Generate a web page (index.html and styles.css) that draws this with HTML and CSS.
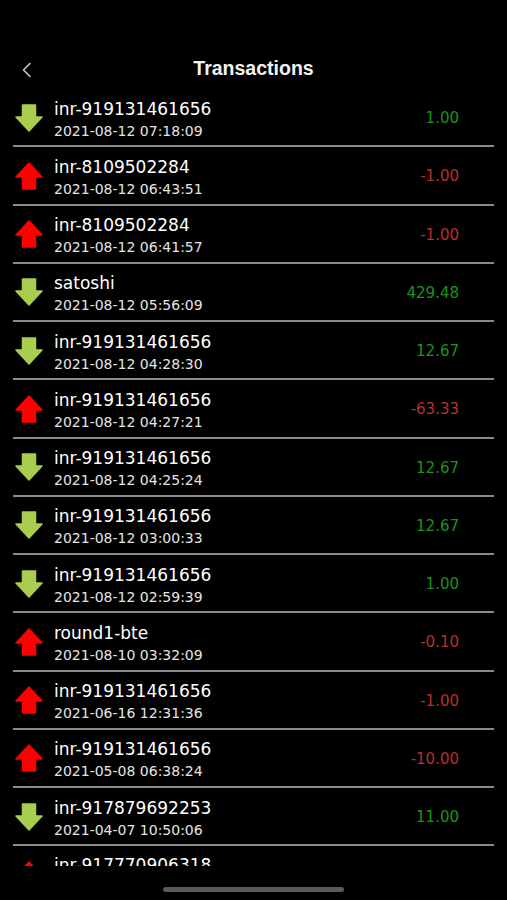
FILE: index.html
```html
<!DOCTYPE html>
<html lang="en">
<head>
  <meta charset="UTF-8">
  <meta name="viewport" content="width=device-width, initial-scale=1">
  <title>Transactions</title>
  <link rel="stylesheet" href="styles.css">
</head>
<body>
  <svg class="defs" width="0" height="0" aria-hidden="true">
    <symbol id="arrowIn" viewBox="0 0 28 28">
      <path d="M7.5 1 H20.5 V13 H27 L14 27 L1 13 H7.5 Z" fill="#a9cd4e" stroke="#a9cd4e" stroke-width="1.5" stroke-linejoin="round"/>
    </symbol>
    <symbol id="arrowOut" viewBox="0 0 28 28">
      <path d="M7.5 27 H20.5 V15 H27 L14 1 L1 15 H7.5 Z" fill="#ff0000" stroke="#ff0000" stroke-width="1.5" stroke-linejoin="round"/>
    </symbol>
  </svg>

  <div class="screen">
    <!-- Header -->
    <div class="header">
      <button class="back" aria-label="Back">
        <svg width="12" height="16" viewBox="0 0 12 16"><polyline points="9,1.5 2.5,8 9,14.5" fill="none" stroke="#c8c8c8" stroke-width="1.6" stroke-linecap="round" stroke-linejoin="round"/></svg>
      </button>
      <h1>Transactions</h1>
      <span></span>
    </div>

    <!-- Transaction list -->
    <div class="list">
      <div class="row">
        <svg class="icon"><use href="#arrowIn"/></svg>
        <div class="info"><div class="name">inr-919131461656</div><div class="date">2021-08-12 07:18:09</div></div>
        <div class="amount in">1.00</div>
      </div>
      <div class="row">
        <svg class="icon"><use href="#arrowOut"/></svg>
        <div class="info"><div class="name">inr-8109502284</div><div class="date">2021-08-12 06:43:51</div></div>
        <div class="amount out">-1.00</div>
      </div>
      <div class="row">
        <svg class="icon"><use href="#arrowOut"/></svg>
        <div class="info"><div class="name">inr-8109502284</div><div class="date">2021-08-12 06:41:57</div></div>
        <div class="amount out">-1.00</div>
      </div>
      <div class="row">
        <svg class="icon"><use href="#arrowIn"/></svg>
        <div class="info"><div class="name">satoshi</div><div class="date">2021-08-12 05:56:09</div></div>
        <div class="amount in">429.48</div>
      </div>
      <div class="row">
        <svg class="icon"><use href="#arrowIn"/></svg>
        <div class="info"><div class="name">inr-919131461656</div><div class="date">2021-08-12 04:28:30</div></div>
        <div class="amount in">12.67</div>
      </div>
      <div class="row">
        <svg class="icon"><use href="#arrowOut"/></svg>
        <div class="info"><div class="name">inr-919131461656</div><div class="date">2021-08-12 04:27:21</div></div>
        <div class="amount out">-63.33</div>
      </div>
      <div class="row">
        <svg class="icon"><use href="#arrowIn"/></svg>
        <div class="info"><div class="name">inr-919131461656</div><div class="date">2021-08-12 04:25:24</div></div>
        <div class="amount in">12.67</div>
      </div>
      <div class="row">
        <svg class="icon"><use href="#arrowIn"/></svg>
        <div class="info"><div class="name">inr-919131461656</div><div class="date">2021-08-12 03:00:33</div></div>
        <div class="amount in">12.67</div>
      </div>
      <div class="row">
        <svg class="icon"><use href="#arrowIn"/></svg>
        <div class="info"><div class="name">inr-919131461656</div><div class="date">2021-08-12 02:59:39</div></div>
        <div class="amount in">1.00</div>
      </div>
      <div class="row">
        <svg class="icon"><use href="#arrowOut"/></svg>
        <div class="info"><div class="name">round1-bte</div><div class="date">2021-08-10 03:32:09</div></div>
        <div class="amount out">-0.10</div>
      </div>
      <div class="row">
        <svg class="icon"><use href="#arrowOut"/></svg>
        <div class="info"><div class="name">inr-919131461656</div><div class="date">2021-06-16 12:31:36</div></div>
        <div class="amount out">-1.00</div>
      </div>
      <div class="row">
        <svg class="icon"><use href="#arrowOut"/></svg>
        <div class="info"><div class="name">inr-919131461656</div><div class="date">2021-05-08 06:38:24</div></div>
        <div class="amount out">-10.00</div>
      </div>
      <div class="row">
        <svg class="icon"><use href="#arrowIn"/></svg>
        <div class="info"><div class="name">inr-917879692253</div><div class="date">2021-04-07 10:50:06</div></div>
        <div class="amount in">11.00</div>
      </div>
      <!-- partly scrolled out of view -->
      <div class="row">
        <svg class="icon"><use href="#arrowOut"/></svg>
        <div class="info"><div class="name">inr-917770906318</div></div>
      </div>
    </div>

    <!-- Home indicator -->
    <div class="footer"><div class="home-bar"></div></div>
  </div>
</body>
</html>
```

FILE: styles.css
```css
body {
  margin: 0;
  padding: 0;
  background: #000;
  color: #fff;
  font-family: "DejaVu Sans", sans-serif;
}
.defs {
  position: absolute;
  width: 0;
  height: 0;
}
.screen {
  width: 507px;
  height: 900px;
  display: flex;
  flex-direction: column;
  overflow: hidden;
}
.header {
  height: 89px;
  box-sizing: border-box;
  padding-top: 57px;
  display: grid;
  grid-template-columns: 40px 1fr 40px;
  align-items: start;
}
.back {
  background: none;
  border: none;
  padding: 3px 0 0 21px;
  margin: 0;
  height: 22px;
  display: flex;
  align-items: center;
  cursor: pointer;
}
.header h1 {
  margin: 0;
  text-align: center;
  font-family: "Liberation Sans", Arial, sans-serif;
  font-weight: bold;
  font-size: 19.5px;
  line-height: 22px;
  color: #f2f2f2;
}
.list {
  height: 777px;
  overflow: hidden;
  padding: 0 13px;
}
.row {
  height: 52.25px;
  padding: 4px 35px 0 2px;
  border-bottom: 2px solid #8a8a8a;
  display: flex;
  align-items: center;
}
.icon {
  width: 28px;
  height: 28px;
  flex-shrink: 0;
  margin-top: -3px;
}
.info {
  margin-left: 11px;
}
.row:last-child .info {
  align-self: flex-start;
  margin-top: 5px;
}
.name {
  font-size: 17px;
  line-height: 20px;
  color: #fff;
}
.date {
  font-size: 14px;
  line-height: 18px;
  margin-top: 3px;
  color: #e4e4e4;
}
.amount {
  margin-left: auto;
  font-size: 15px;
  margin-top: -2px;
}
.amount.in {
  color: #1c921c;
}
.amount.out {
  color: #b92f2c;
}
.footer {
  flex: 1;
  display: flex;
  justify-content: center;
}
.home-bar {
  width: 181px;
  height: 5px;
  margin-top: 21px;
  border-radius: 3px;
  background: #5a5a5a;
}
```
